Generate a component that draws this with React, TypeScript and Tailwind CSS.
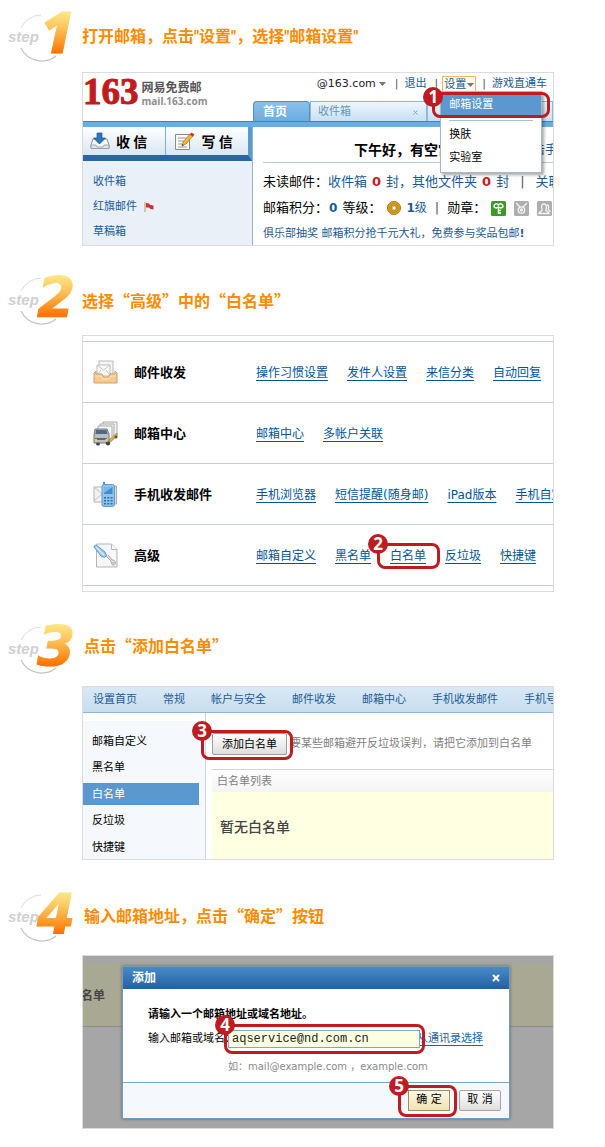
import type { ReactNode } from "react";

const SANS = "font-['DejaVu_Sans','Noto_Sans_CJK_SC',sans-serif]";
const CJK = "font-['Noto_Sans_CJK_SC',sans-serif]";

function StepBadge({ n }: { n: number }) {
  const id = `step-fill-${n}`;
  return (
    <svg width="74" height="50" viewBox="0 0 74 50" className="shrink-0 overflow-visible" role="img" aria-label={`step ${n}`}>
      <defs>
        <linearGradient id={id} x1="0" y1="0" x2="0" y2="42" gradientUnits="userSpaceOnUse">
          <stop offset="0" stopColor="#fbe88a" />
          <stop offset="0.35" stopColor="#fdc65e" />
          <stop offset="0.7" stopColor="#fd9a2b" />
          <stop offset="1" stopColor="#ff6f00" />
        </linearGradient>
      </defs>
      <path d="M13 16 A23 23 0 0 1 33 3" fill="none" stroke="#dcdcdc" strokeWidth="1" />
      <path d="M13 36 A23 23 0 0 0 48 44" fill="none" stroke="#c4c4c4" strokeWidth="1.2" />
      <text x="0" y="30" className="font-['Liberation_Sans',sans-serif] text-[15px] font-bold italic" fill="#d0d0d0">
        step
      </text>
      <text
        x={n === 1 ? 33 : 29}
        y="41"
        className={
          n === 1
            ? "font-['Open_Sans',sans-serif] text-[56px] font-extrabold italic"
            : "font-['DejaVu_Sans',sans-serif] text-[55px] font-bold italic"
        }
        fill={`url(#${id})`}
        stroke={`url(#${id})`}
        strokeWidth="1"
      >
        {n}
      </text>
    </svg>
  );
}

function Step({ n, title, spacing, titleStyle = CJK, children }: { n: number; title: string; spacing: string; titleStyle?: string; children: ReactNode }) {
  return (
    <section>
      <header className={`flex items-center pl-2 ${spacing}`}>
        <StepBadge n={n} />
        <h2 className={`text-[16px] leading-6 font-bold whitespace-nowrap text-[#ff8c00] ${titleStyle}`}>{title}</h2>
      </header>
      <div className={`mr-[51px] ml-[82px] overflow-hidden border border-[#dcdcdc] bg-white text-[11px] leading-4 whitespace-nowrap ${SANS}`}>
        {children}
      </div>
    </section>
  );
}

function Callout({ n, outline, badge = "-top-3", children, className = "" }: { n: number; outline: string; badge?: string; children: ReactNode; className?: string }) {
  return (
    <div className={`relative ${className}`}>
      {children}
      <div className={`pointer-events-none absolute z-10 rounded-lg border-3 border-[#be1c20] ${outline}`}>
        <span className={`absolute -left-3 flex size-5 items-center justify-center rounded-full bg-[#be1c20] font-['Open_Sans',sans-serif] text-[17px] leading-5 font-bold text-white ${badge}`}>
          {n}
        </span>
      </div>
    </div>
  );
}

function Caret() {
  return (
    <svg width="7" height="4" viewBox="0 0 7 4" className="inline-block">
      <path d="M0 0h7L3.500 4z" fill="#777" />
    </svg>
  );
}

function InboxIcon() {
  return (
    <svg width="20" height="18" viewBox="0 0 20 18">
      <path d="M3 7h14l2 6v3.500H1V13z" fill="#f5f5f5" stroke="#8c959e" />
      <path d="M1 13h5l1 2h6l1-2h5v3.500H1z" fill="#dfe3e7" stroke="#8c959e" strokeWidth=".7" />
      <path d="M7 1h5v5h3.500L9.500 12 3.500 6H7z" fill="#2877bd" stroke="#155692" strokeWidth=".7" />
    </svg>
  );
}

function ComposeIcon() {
  return (
    <svg width="21" height="19" viewBox="0 0 21 19">
      <path d="M1.500 2.500h14v15h-14z" fill="#fafafa" stroke="#8a8a8a" />
      <path d="M4 6h8M4 9h6M4 12h4M4 15h9" stroke="#9a9a9a" />
      <path d="M8 14l1-4 7-8 3 2-7 8z" fill="#f5b43c" stroke="#a76d18" strokeWidth=".7" />
      <path d="M15.500 2.500L17.500.500l3 2-1.500 2z" fill="#d3342c" />
      <path d="M8 14l.5-2 1.300 1z" fill="#333" />
    </svg>
  );
}

function Medal({ kind }: { kind: "key" | "medal" | "people" }) {
  return (
    <svg width="15" height="15" viewBox="0 0 15 15">
      <rect width="15" height="15" rx="1.500" fill={kind === "key" ? "#3c9a26" : "#aeaeae"} />
      {kind === "key" && (
        <g fill="none" stroke="#fff" strokeWidth="1.500">
          <path d="M3 5.500c0-3 3-3.500 4.500-1.500C9 2 12 2.500 12 5.500c-1 1.500-3 1.500-4.500.500C6 7 4 7 3 5.500z" />
          <path d="M7.500 6v7M7.500 9.500H10M7.500 12H10" />
        </g>
      )}
      {kind === "medal" && (
        <g fill="none" stroke="#f4f4f4" strokeWidth="1.300">
          <path d="M2 2l4 4M13 2L9 6" />
          <circle cx="7.500" cy="9" r="3.200" />
          <circle cx="7.500" cy="9" r="1" />
        </g>
      )}
      {kind === "people" && (
        <g fill="none" stroke="#f4f4f4" strokeWidth="1.300">
          <path d="M2 12.500c0-3 4-1.500 3.200-4C4 6 4.300 3 7 3s3 3 1.800 5.500c-.8 2.500 3.200 1 3.200 4z" />
          <path d="M10 4c2 0 2 2.500 1.200 4 0 1 1.800 1 1.800 3" />
        </g>
      )}
    </svg>
  );
}

function Bar({ className = "" }: { className?: string }) {
  return <span className={`text-[#555] ${className}`}>|</span>;
}

function MailHome() {
  return (
    <div>
      <div className="grid grid-cols-[170px_1fr]">
        <div className="flex items-center gap-[3px] pb-[10px] leading-none">
          <span className="font-['Liberation_Serif',serif] text-[37px] leading-9 font-bold text-[#be1c20] [-webkit-text-stroke:1px_#be1c20]">163</span>
          <span className="flex flex-col pt-1">
            <span className={`text-[12px] leading-[14px] font-bold text-[#555] ${CJK}`}>网易免费邮</span>
            <span className="font-['Open_Sans',sans-serif] text-[10px] leading-[14px] font-bold text-[#8e8e8e]">mail.163.com</span>
          </span>
        </div>
        <div className="flex flex-col">
          <nav className="flex h-7 items-start justify-end pt-[3px] pr-[6px] text-[#1a5a96]">
            <span className="text-[#222]">@163.com</span>
            <span className="px-[3px]"><Caret /></span>
            <Bar className="px-[6px]" />
            <a href="#logout">退出</a>
            <Bar className="pr-1 pl-[8px]" />
            <div className="relative z-20">
              <button type="button" className="flex h-4 items-center gap-px border border-b-0 border-[#f0b860] bg-[#fffaf0] px-px">
                设置 <Caret />
              </button>
              <div className="absolute top-[15px] -left-[2px] flex w-[102px] flex-col border border-[#a9b8c6] bg-white pb-[3px] text-black shadow-[2px_2px_3px_rgba(0,0,0,0.35)]">
                <Callout n={1} badge="-top-2" outline="-inset-x-[9px] top-0 -bottom-px">
                  <button type="button" className="h-[25px] w-full bg-[#5b98d0] pt-px pl-2 text-left text-white">邮箱设置</button>
                </Callout>
                <hr className="mx-2 mt-[3px] mb-[2px] border-[#a9c0d4]" />
                <button type="button" className="h-[23px] pl-2 text-left">换肤</button>
                <button type="button" className="h-[23px] pl-2 text-left">实验室</button>
              </div>
            </div>
            <Bar className="px-[6px]" />
            <a href="#games">游戏直通车</a>
          </nav>
          <div className="flex h-5 items-stretch">
            <a href="#home" className="flex w-[57px] items-center rounded-t-sm border border-b-0 border-[#4d8fc6] bg-linear-to-b from-[#8cc0ea] to-[#69ade1] pt-px pl-[9px] text-[12px] font-bold text-white">
              首页
            </a>
            <a href="#inbox" className="flex w-[117px] items-center justify-between border border-b-0 border-[#8db9dd] bg-linear-to-b from-[#eef6fc] to-[#c7e0f4] pt-px pr-2 pl-[7px] text-[#6694bb]">
              收件箱
              <svg width="5" height="5" viewBox="0 0 5 5"><path d="M.5.500l4 4M4.500.500l-4 4" stroke="#7fa6c8" /></svg>
            </a>
            <span className="flex-1 border border-b-0 border-[#8db9dd] bg-linear-to-b from-[#eef6fc] to-[#c7e0f4]" />
          </div>
        </div>
      </div>
      <div className="h-[6px] border-t border-[#3f82bd] bg-[#69ade1]" />
      <div className="grid grid-cols-[170px_1fr]">
        <div className="border-r border-[#8fb4d4] bg-[#e9f0f8]">
          <div className={`flex border-r-4 border-b-[6px] border-r-[#5b9ad0] border-b-[#2a65a5] text-[14px] font-bold ${CJK}`}>
            <button type="button" className="flex h-7 flex-1 items-center gap-[6px] border-r border-[#7faed5] bg-linear-to-b from-white to-[#d9e6f2] pl-[7px]">
              <InboxIcon /> 收 信
            </button>
            <button type="button" className="flex h-7 flex-1 items-center gap-[7px] bg-linear-to-b from-white to-[#d9e6f2] pl-[8px]">
              <ComposeIcon /> 写 信
            </button>
          </div>
          <ul className="flex flex-col gap-px pt-[9px] pl-[10px] text-[#1a5a96]">
            <li className="flex h-6 items-center"><a href="#inbox">收件箱</a></li>
            <li className="flex h-6 items-center gap-[7px]">
              <a href="#flag">红旗邮件</a>
              <svg width="10" height="10" viewBox="0 0 10 10">
                <path d="M1 0v10" stroke="#b99a55" />
                <path d="M2 1l3 .500 1 1.500 3.500.500v4l-3-.500-1.500-1.500L2 5.500z" fill="#d22f35" />
              </svg>
            </li>
            <li className="flex h-6 items-center"><a href="#draft">草稿箱</a></li>
          </ul>
        </div>
        <div className="min-w-0 overflow-hidden pl-[10px]">
          <div className={`flex h-9 items-center justify-between border-b border-[#b4c9db] pt-2 text-[14px] font-bold ${CJK}`}>
            <span className="pl-[91px]">下午好，有空常</span>
            <a href="#phone" className="-mr-1 text-[12px] font-normal text-[#1a5a96]">击手</a>
          </div>
          <div className="pt-[6px] text-[13px]">
            <p className="flex h-[26px] items-center text-[#1a5a96]">
              <span className="text-black">未读邮件：</span>收件箱
              <b className="px-[5px] text-[#c41d22]">0</b>封，其他文件夹
              <b className="px-[5px] text-[#c41d22]">0</b>封<Bar className="px-[11px]" />关联
            </p>
            <p className="flex h-[26px] items-center">
              邮箱积分：<b className="pr-[5px] pl-px text-[12px] text-[#1a5a96]">0</b>等级：
              <svg width="14" height="14" viewBox="0 0 14 14" className="ml-[6px]">
                <circle cx="7" cy="7" r="6.500" fill="#dba520" stroke="#a97812" />
                <circle cx="7" cy="7" r="4.500" fill="none" stroke="#b98817" />
                <rect x="5" y="5" width="4" height="4" fill="#fff" stroke="#a97812" strokeWidth=".8" />
              </svg>
              <span className="pl-[5px] text-[12px] text-[#1a5a96]"><b>1</b>级</span>
              <Bar className="px-2" />勋章：
              <span className="flex gap-2 pl-[5px]">
                <Medal kind="key" /><Medal kind="medal" /><Medal kind="people" />
              </span>
            </p>
          </div>
          <p className="flex h-6 items-center pt-px text-[#1a5a96]">俱乐部抽奖 邮箱积分抢千元大礼，免费参与奖品包邮<b>!</b></p>
        </div>
      </div>
    </div>
  );
}

function TrayIcon() {
  return (
    <svg width="25" height="25" viewBox="0 0 25 25">
      <path d="M6 1h14v13H6z" fill="#f4f4f4" stroke="#b9b9b9" />
      <path d="M4 5h13v11H4z" fill="#fafafa" stroke="#bcbcbc" />
      <path d="M4 5l6.500 5L17 5M4 15l4-5M17 15l-4-5" fill="none" stroke="#c4c4c4" />
      <path d="M1 13l2-2v3h6l1.500 3h5l1.500-3h5v-3l2 2v10H1z" fill="#f7c98a" stroke="#c9a273" />
      <path d="M2 16h6l2 3h6l2-3h5" fill="none" stroke="#fbe3bf" />
    </svg>
  );
}

function TruckIcon() {
  return (
    <svg width="25" height="25" viewBox="0 0 25 25">
      <path d="M10 1h14v15H10z" fill="#f3f3f3" stroke="#aaa" />
      <path d="M7 3h14v15H7z" fill="#f3f3f3" stroke="#aaa" />
      <path d="M5 5h14v15H5z" fill="#f7f7f7" stroke="#aaa" />
      <path d="M16 19l8-7v3l-8 7z" fill="#e6b63e" stroke="#a9812b" strokeWidth=".7" />
      <path d="M2 8h12l2 5v9H1v-8z" fill="#b9bec3" stroke="#777" />
      <path d="M3 9h10.500l1 4H2.500z" fill="#4d6a86" />
      <path d="M2 17h12v2H2z" fill="#666" />
      <circle cx="3" cy="19" r="1.200" fill="#f3d25a" /><circle cx="13.500" cy="19" r="1.200" fill="#f3d25a" />
      <ellipse cx="5" cy="23" rx="2" ry="1.500" fill="#444" /><ellipse cx="15" cy="22.500" rx="2.200" ry="2" fill="#444" />
      <circle cx="23" cy="16" r="1.500" fill="#555" />
    </svg>
  );
}

function PhoneIcon() {
  return (
    <svg width="25" height="25" viewBox="0 0 25 25">
      <path d="M1 5h10v15H1z" fill="#f2f2f2" stroke="#b5b5b5" />
      <path d="M1 5l8 7-8 7" fill="none" stroke="#c0c0c0" />
      <path d="M21 4h2.500v18H21z" fill="#dcdcdc" stroke="#aaa" />
      <path d="M11 0v4" stroke="#4f93c9" strokeWidth="2" />
      <rect x="9" y="2.500" width="12.500" height="22" rx="2" fill="#8fc3ea" stroke="#5c9ccf" />
      <rect x="11" y="5" width="8.500" height="7" fill="#3f8fd0" />
      <path d="M11 5h8.500L11 11z" fill="#79b9e8" />
      <path d="M11 15h2v1.500h-2zM14.300 15h2v1.500h-2zM17.600 15h2v1.500h-2zM11 18h2v1.500h-2zM14.300 18h2v1.500h-2zM17.600 18h2v1.500h-2zM11 21h2v1.500h-2zM14.300 21h2v1.500h-2zM17.600 21h2v1.500h-2z" fill="#2d6ea8" />
    </svg>
  );
}

function ToolIcon() {
  return (
    <svg width="25" height="25" viewBox="0 0 25 25">
      <path d="M3.500 1h15l5.500 5.500V24H3.500z" fill="#f6f6f6" stroke="#b5b5b5" />
      <path d="M18.500 1v5.500H24" fill="#fff" stroke="#b5b5b5" />
      <path d="M13 13l5 5c0 3 2 5 3.500 4l-2-2 1-1 2 2c1-2-1-4-3.500-4l-4-5" fill="#e6e6e6" stroke="#9e9e9e" strokeWidth=".9" />
      <path d="M1 4c0-2 2-2.500 4-.500l7 5.500 1.500 3.500-2 2L8 13z" fill="#9ccaee" stroke="#5f97c4" />
      <path d="M3 4l8 8" stroke="#d5eafa" strokeWidth="1.500" />
    </svg>
  );
}

const settings = [
  { icon: <TrayIcon />, label: "邮件收发", links: ["操作习惯设置", "发件人设置", "来信分类", "自动回复"] },
  { icon: <TruckIcon />, label: "邮箱中心", links: ["邮箱中心", "多帐户关联"] },
  { icon: <PhoneIcon />, label: "手机收发邮件", links: ["手机浏览器", "短信提醒(随身邮)", "iPad版本", "手机自定义"] },
  { icon: <ToolIcon />, label: "高级", links: ["邮箱自定义", "黑名单", "白名单", "反垃圾", "快捷键"] },
];

function SettingsList() {
  return (
    <div className="py-[5px]">
      <ul className="border-t border-[#c3d1de]">
        {settings.map((row) => (
          <li key={row.label} className="grid h-[61px] grid-cols-[51px_122px_1fr] items-center border-b border-[#c3d1de] pt-px">
            <span className="pl-[10px]">{row.icon}</span>
            <b className="text-[13px] text-black">{row.label}</b>
            <span className="flex gap-[19px] text-[12px] text-[#00559a]">
              {row.links.map((link) => {
                const anchor = (
                  <a key={link} href={`#${link}`} className="underline underline-offset-[3px]">
                    {link}
                  </a>
                );
                return link === "白名单" ? (
                  <Callout key={link} n={2} outline="-top-[5px] -bottom-[5px] -left-[13px] -right-[14px]">
                    {anchor}
                  </Callout>
                ) : (
                  anchor
                );
              })}
            </span>
          </li>
        ))}
      </ul>
    </div>
  );
}

function Whitelist() {
  return (
    <div>
      <nav className="flex h-[26px] items-center gap-[26px] border-b border-[#8fb5d6] bg-linear-to-b from-[#dae8f5] to-[#c6deee] pt-px pl-[10px] text-[#1a5a96]">
        {["设置首页", "常规", "帐户与安全", "邮件收发", "邮箱中心", "手机收发邮件", "手机号码邮箱"].map((t) => (
          <a key={t} href={`#${t}`} className="shrink-0">{t}</a>
        ))}
      </nav>
      <div className="grid grid-cols-[123px_1fr]">
        <div className="border-r border-[#c6d6e5] pt-2">
          <ul className="flex h-full flex-col justify-between bg-[#f5f9fd] pt-[9px] pb-px text-black">
            {["邮箱自定义", "黑名单", "白名单", "反垃圾", "快捷键"].map((t) => (
              <li key={t} className={t === "白名单" ? "mr-[6px] flex h-[22px] items-center bg-[#5b98d0] pt-px pl-[9px] text-white" : "flex h-[22px] items-center pt-px pl-[9px]"}>
                <a href={`#${t}`}>{t}</a>
              </li>
            ))}
          </ul>
        </div>
        <div className="min-w-0 pl-[6px]">
          <div className="flex h-14 items-center pt-[6px]">
            <Callout n={3} outline="-top-[3px] -bottom-[5px] -left-[11px] -right-[6px]">
              <button type="button" className="h-[22px] w-[75px] rounded-xs border border-[#9a9a9a] bg-linear-to-b from-white to-[#dedede] pt-px text-black">添加白名单</button>
            </Callout>
            <span className="pl-[3px] text-[#808080]">要某些邮箱避开反垃圾误判，请把它添加到白名单</span>
          </div>
          <div className="flex h-[23px] items-center border-t border-[#d4d4d4] bg-linear-to-b from-white to-[#f4f4f4] pt-px pl-[5px] text-[#808080]">白名单列表</div>
          <div className={`flex h-[67px] items-center bg-[#ffffe1] pl-2 text-[14px] font-medium text-[#444] ${CJK}`}>暂无白名单</div>
        </div>
      </div>
    </div>
  );
}

function AddDialog() {
  return (
    <div className="relative bg-[#a5a5a6] px-[39px] pt-[10px] pb-[9px]">
      <div className="absolute inset-0">
        <div className="h-[7px] bg-[#a4a5a6]" />
        <div className="flex h-16 items-center overflow-hidden border-b border-[#8d8d8d] bg-[#a9a893]">
          <span className={`-ml-[2px] text-[12px] font-bold text-[#454545] ${CJK}`}>名单</span>
        </div>
        <div className="h-full bg-[#a6a6a7]" />
      </div>
      <div role="dialog" aria-label="添加" className="relative mr-1 border border-[#6f9cc2] bg-white shadow-[0_0_3px_rgba(0,0,0,0.4)]">
        <div className="flex h-[22px] items-center justify-between bg-linear-to-b from-[#478bc6] to-[#2560a2] pr-[9px] pl-[9px] text-[12px] font-bold text-white">
          添加
          <button type="button" aria-label="关闭">
            <svg width="8" height="8" viewBox="0 0 8 8"><path d="M1 1l6 6M7 1L1 7" stroke="#fff" strokeWidth="2" /></svg>
          </button>
        </div>
        <form className="pt-[18px] pl-[25px]" onSubmit={(e) => e.preventDefault()}>
          <p className="font-bold text-black">请输入一个邮箱地址或域名地址。</p>
          <div className="flex h-8 items-center text-black">
            <label htmlFor="address" className="w-20">输入邮箱或域名：</label>
            <Callout n={4} outline="-top-[6px] -bottom-[6px] -left-[4px] -right-[5px]" className="flex">
              <input
                id="address"
                defaultValue="aqservice@nd.com.cn"
                className="h-[18px] w-[192px] border border-[#7fa6c8] bg-[#ffffe1] pl-[3px] font-['Liberation_Mono',monospace] text-[12px] text-[#222]"
              />
            </Callout>
            <a href="#contacts" className="-ml-[3px] text-[#1a66a8] underline underline-offset-[3px]">从通讯录选择</a>
          </div>
          <p className="flex h-[27px] items-center pb-[3px] pl-20 text-[10px] text-[#8a8a8a]">如：mail@example.com ，example.com</p>
        </form>
        <div className="flex h-[36px] items-center justify-end gap-[9px] border-t border-[#7fa6c8] bg-[#f5f9fd] pr-2 pb-px">
          <Callout n={5} outline="-top-[5px] -bottom-[6px] -left-[10px] -right-[7px]">
            <button type="button" className="h-[21px] w-[42px] border border-[#9a8f6a] bg-linear-to-b from-[#fdf9e3] to-[#efe3b4] text-black">确 定</button>
          </Callout>
          <button type="button" className="h-[21px] w-[42px] rounded-xs border border-[#a5a5a5] bg-linear-to-b from-white to-[#dedede] text-black">取 消</button>
        </div>
      </div>
    </div>
  );
}

export default function App() {
  return (
    <main lang="zh-CN" className="min-h-screen bg-white pb-[18px]">
      <Step n={1} title={'打开邮箱，点击"设置"，选择"邮箱设置"'} spacing="pt-3 pb-[10px]" titleStyle="font-['Roboto','Noto_Sans_CJK_SC',sans-serif]">
        <MailHome />
      </Step>
      <Step n={2} title="选择“高级”中的“白名单”" spacing="pt-[29px] pb-[10px]">
        <SettingsList />
      </Step>
      <Step n={3} title="点击“添加白名单”" spacing="pt-8 pb-3" titleStyle="font-['Noto_Sans_CJK_SC',sans-serif] pb-2 pl-[2px]">
        <Whitelist />
      </Step>
      <Step n={4} title="输入邮箱地址，点击“确定”按钮" spacing="pt-8 pb-[13px]" titleStyle="font-['Noto_Sans_CJK_SC',sans-serif] pb-1 pl-[2px]">
        <AddDialog />
      </Step>
    </main>
  );
}
